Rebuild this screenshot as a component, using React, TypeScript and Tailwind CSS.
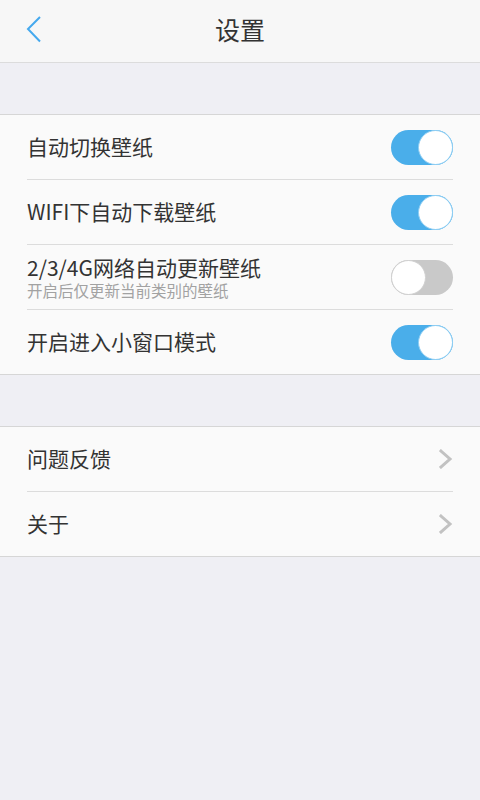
import React from "react";

const font = { fontFamily: '"Noto Sans CJK SC", "Noto Sans", sans-serif' };

function Toggle({ on }: { on: boolean }) {
  return (
    <div
      className={`relative w-[62px] h-[35px] rounded-full ${on ? "bg-[#4aaeea]" : "bg-[#c9c9c9]"}`}
    >
      <div
        className={`absolute top-0 w-[35px] h-[35px] rounded-full bg-white ${
          on ? "right-0 border border-[#8ccdf3]" : "left-0 border border-[#d0d0d0]"
        }`}
      />
    </div>
  );
}

function Chevron() {
  return (
    <svg width="14" height="20" viewBox="0 0 14 20" className="block">
      <polyline points="2,2 11,10 2,18" fill="none" stroke="#c2c2c2" strokeWidth="3" strokeLinecap="square" strokeLinejoin="miter" />
    </svg>
  );
}

function Divider() {
  return <div className="mx-[27px] h-px bg-[#dcdcdc]" />;
}

export default function App() {
  return (
    <div className="w-[480px] h-[800px] bg-[#efeff4] flex flex-col" style={font}>
      <div className="h-[63px] bg-[#f7f7f7] border-b border-[#dcdcdc] relative flex items-center justify-center shrink-0">
        <svg width="20" height="30" viewBox="0 0 20 30" className="absolute left-[24px] top-[15px]">
          <polyline points="16,2 4,14 16,26.5" fill="none" stroke="#45a9ee" strokeWidth="2" />
        </svg>
        <span className="text-[25px] text-[#333] leading-none -mt-[3px]">设置</span>
      </div>

      <div className="h-[51px] shrink-0" />

      <div className="bg-[#fafafa] border-y border-[#d6d6d6] shrink-0">
        <div className="h-[64px] flex items-center justify-between pl-[27px] pr-[27px]">
          <span className="text-[21px] text-[#333]">自动切换壁纸</span>
          <Toggle on />
        </div>
        <Divider />
        <div className="h-[64px] flex items-center justify-between pl-[27px] pr-[27px]">
          <span className="text-[21px] text-[#333]">WIFI下自动下载壁纸</span>
          <Toggle on />
        </div>
        <Divider />
        <div className="h-[64px] flex items-center justify-between pl-[27px] pr-[27px]">
          <div className="flex flex-col gap-[2px]">
            <span className="text-[21px] text-[#333] leading-[24px]">2/3/4G网络自动更新壁纸</span>
            <span className="text-[15.5px] text-[#a2a2a2] leading-[18px]">开启后仅更新当前类别的壁纸</span>
          </div>
          <Toggle on={false} />
        </div>
        <Divider />
        <div className="h-[64px] flex items-center justify-between pl-[27px] pr-[27px]">
          <span className="text-[21px] text-[#333]">开启进入小窗口模式</span>
          <Toggle on />
        </div>
      </div>

      <div className="h-[51px] shrink-0" />

      <div className="bg-[#fafafa] border-y border-[#d6d6d6] shrink-0">
        <div className="h-[64px] flex items-center justify-between pl-[27px] pr-[27px]">
          <span className="text-[21px] text-[#333]">问题反馈</span>
          <Chevron />
        </div>
        <Divider />
        <div className="h-[64px] flex items-center justify-between pl-[27px] pr-[27px]">
          <span className="text-[21px] text-[#333]">关于</span>
          <Chevron />
        </div>
      </div>
    </div>
  );
}
